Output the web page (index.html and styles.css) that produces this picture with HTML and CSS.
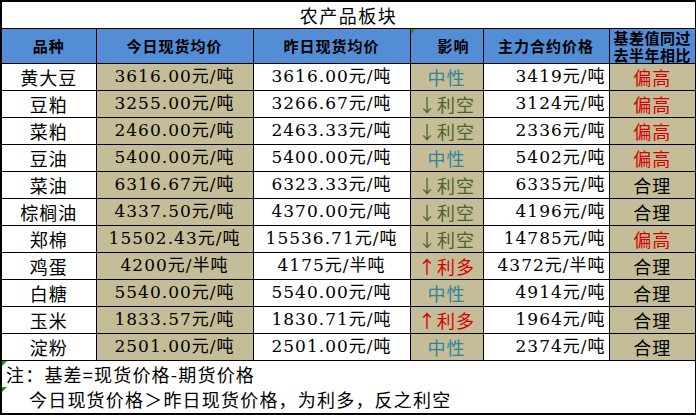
FILE: index.html
```html
<!DOCTYPE html>
<html lang="zh">
<head>
<meta charset="utf-8">
<title>农产品板块</title>
<link rel="stylesheet" href="styles.css">
</head>
<body>
<table class="board">
  <colgroup>
    <col class="c1"><col class="c2"><col class="c3"><col class="c4"><col class="c5"><col class="c6">
  </colgroup>
  <tr class="title-row"><td colspan="6" class="title">农产品板块</td></tr>
  <tr class="head-row">
    <th>品种</th>
    <th>今日现货均价</th>
    <th>昨日现货均价</th>
    <th class="mark hd-effect">影响</th>
    <th>主力合约价格</th>
    <th class="hd-last"><span class="hl">基差值同过</span><span class="hl">去半年相比</span></th>
  </tr>
  <tr><td class="name">黄大豆</td><td class="num tan">3616.00元/吨</td><td class="num">3616.00元/吨</td><td class="eff tan neu">中性</td><td class="num right">3419元/吨</td><td class="cmp tan high">偏高</td></tr>
  <tr><td class="name">豆粕</td><td class="num tan">3255.00元/吨</td><td class="num">3266.67元/吨</td><td class="eff tan bear">↓利空</td><td class="num right">3124元/吨</td><td class="cmp tan high">偏高</td></tr>
  <tr><td class="name">菜粕</td><td class="num tan">2460.00元/吨</td><td class="num">2463.33元/吨</td><td class="eff tan bear">↓利空</td><td class="num right">2336元/吨</td><td class="cmp tan high">偏高</td></tr>
  <tr><td class="name">豆油</td><td class="num tan">5400.00元/吨</td><td class="num">5400.00元/吨</td><td class="eff tan neu">中性</td><td class="num right">5402元/吨</td><td class="cmp tan high">偏高</td></tr>
  <tr><td class="name">菜油</td><td class="num tan">6316.67元/吨</td><td class="num">6323.33元/吨</td><td class="eff tan bear">↓利空</td><td class="num right">6335元/吨</td><td class="cmp tan ok">合理</td></tr>
  <tr><td class="name">棕榈油</td><td class="num tan">4337.50元/吨</td><td class="num">4370.00元/吨</td><td class="eff tan bear">↓利空</td><td class="num right">4196元/吨</td><td class="cmp tan ok">合理</td></tr>
  <tr><td class="name">郑棉</td><td class="num tan">15502.43元/吨</td><td class="num">15536.71元/吨</td><td class="eff tan bear">↓利空</td><td class="num right">14785元/吨</td><td class="cmp tan high">偏高</td></tr>
  <tr><td class="name">鸡蛋</td><td class="num tan">4200元/半吨</td><td class="num">4175元/半吨</td><td class="eff tan bull">↑利多</td><td class="num right">4372元/半吨</td><td class="cmp tan ok">合理</td></tr>
  <tr><td class="name">白糖</td><td class="num tan">5540.00元/吨</td><td class="num">5540.00元/吨</td><td class="eff tan neu">中性</td><td class="num right">4914元/吨</td><td class="cmp tan ok">合理</td></tr>
  <tr><td class="name">玉米</td><td class="num tan">1833.57元/吨</td><td class="num">1830.71元/吨</td><td class="eff tan bull">↑利多</td><td class="num right">1964元/吨</td><td class="cmp tan ok">合理</td></tr>
  <tr class="last-data"><td class="name">淀粉</td><td class="num tan">2501.00元/吨</td><td class="num">2501.00元/吨</td><td class="eff tan neu">中性</td><td class="num right">2374元/吨</td><td class="cmp tan ok">合理</td></tr>
  <tr class="note-row"><td colspan="6" class="note mark">注：基差=现货价格-期货价格</td></tr>
  <tr class="note-row2"><td colspan="6" class="note note2 mark">今日现货价格＞昨日现货价格，为利多，反之利空</td></tr>
</table>
</body>
</html>
```

FILE: styles.css
```css
html, body {
  margin: 0;
  padding: 0;
  background: #ffffff;
}

.board {
  border-collapse: collapse;
  table-layout: fixed;
  width: 695px;
  border: 2px solid #000;
  font-family: "Noto Sans CJK SC", sans-serif;
  color: #000;
}

.c1 { width: 95px; }
.c2 { width: 157px; }
.c3 { width: 157px; }
.c4 { width: 73px; }
.c5 { width: 126px; }
.c6 { width: 87px; }

.board td, .board th {
  border: 1px solid #000;
  padding: 0;
  text-align: center;
  vertical-align: middle;
  white-space: nowrap;
  overflow: hidden;
  line-height: 1;
}

.title-row { height: 27px; }
.title {
  font-size: 18px;
  letter-spacing: 1.5px;
  padding-top: 1px;
}

.head-row { height: 36px; }
.head-row th {
  background: #538dd5;
  font-size: 15px;
  font-weight: bold;
  letter-spacing: 1px;
}
.board th.hd-effect { text-align: center; padding-left: 14px; }
.board th.hd-last {
  font-size: 15px;
  letter-spacing: 0.5px;
}
.hl {
  display: block;
  height: 17px;
  line-height: 17px;
}

.board tr { height: 27px; }

.name {
  font-size: 18px;
  letter-spacing: 1px;
}

.num {
  font-family: "DejaVu Serif", "Noto Sans CJK SC", serif;
  font-size: 17px;
  letter-spacing: 1px;
}
.board td.right {
  text-align: right;
  padding-right: 3px;
}

.tan { background: #c4bd97; }

.eff, .cmp {
  font-size: 18px;
  letter-spacing: 1px;
}
.neu { color: #31849b; }
.bear { color: #4f6228; }
.bull { color: #d40000; }
.high { color: #d40000; }
.ok { color: #000; }

.note-row { height: 26px; }
.note-row2 { height: 27px; }
.board td.note {
  border-top: none;
  border-bottom: none;
  text-align: left;
  font-size: 18px;
  letter-spacing: 1.2px;
  padding-left: 4px;
}
.board tr.note-row td.note { border-top: 1px solid #000; }
.board td.note2 { padding-left: 27px; padding-bottom: 2px; }

.mark { position: relative; }
.mark::before {
  content: "";
  position: absolute;
  left: 0;
  top: 0;
  width: 0;
  height: 0;
  border-top: 5px solid #10a010;
  border-right: 5px solid transparent;
}
```
